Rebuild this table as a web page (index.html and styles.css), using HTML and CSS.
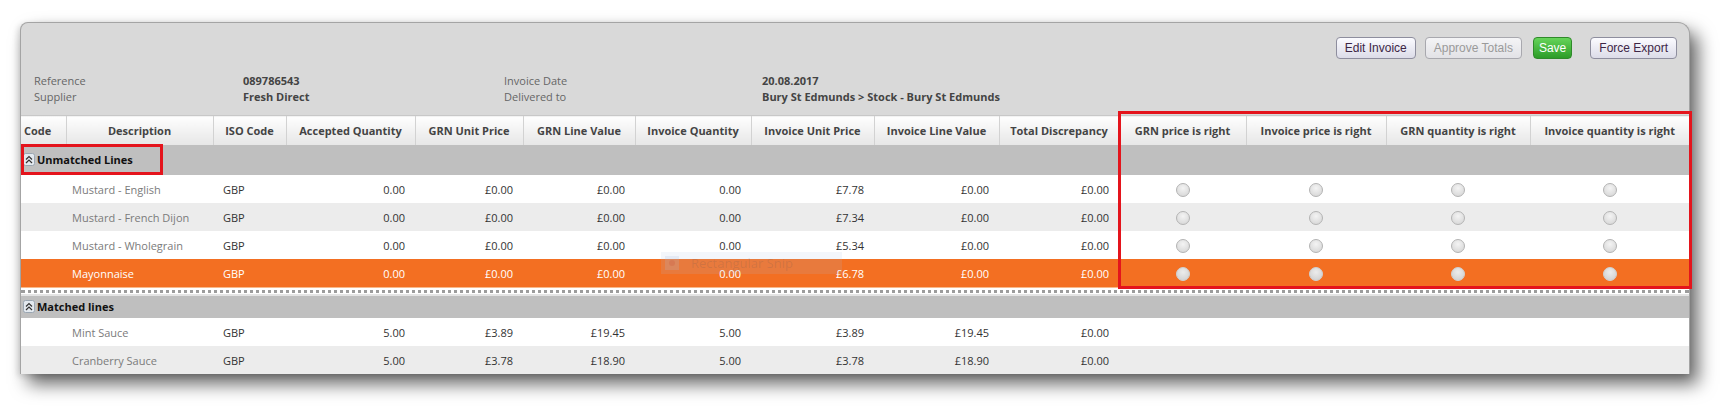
FILE: index.html
```html
<!DOCTYPE html>
<html lang="en">
<head>
  <meta charset="UTF-8" />
  <title>Invoice Reconciliation</title>
  <link rel="stylesheet" href="styles.css">
</head>
<body>

  <div class="page">
    <div class="panel">

      <div class="toolbar">
        <button class="btn">Edit Invoice</button>
        <button class="btn btn-off">Approve Totals</button>
        <button class="btn btn-save">Save</button>
        <button class="btn btn-export">Force Export</button>
      </div>

      <div class="info">
        <div class="info-label">Reference<br>Supplier</div>
        <div class="info-value">089786543<br>Fresh Direct</div>
        <div class="info-label">Invoice Date<br>Delivered to</div>
        <div class="info-value">20.08.2017<br>Bury St Edmunds &gt; Stock - Bury St Edmunds</div>
      </div>

      <div class="grid-wrap">
        <table class="lines">
          <colgroup>
            <col style="width:45px"><col style="width:147px"><col style="width:73px"><col style="width:129px">
            <col style="width:108px"><col style="width:112px"><col style="width:116px"><col style="width:123px">
            <col style="width:125px"><col style="width:120px"><col style="width:127px"><col style="width:140px">
            <col style="width:144px"><col style="width:159px">
          </colgroup>
          <thead>
            <tr>
              <th class="th-code">Code</th>
              <th>Description</th>
              <th>ISO Code</th>
              <th>Accepted Quantity</th>
              <th>GRN Unit Price</th>
              <th>GRN Line Value</th>
              <th>Invoice Quantity</th>
              <th>Invoice Unit Price</th>
              <th>Invoice Line Value</th>
              <th>Total Discrepancy</th>
              <th>GRN price is right</th>
              <th>Invoice price is right</th>
              <th>GRN quantity is right</th>
              <th>Invoice quantity is right</th>
            </tr>
          </thead>
          <tbody>
            <tr class="group">
              <td colspan="14"><span class="group-icon"><svg width="12" height="13" viewBox="0 0 12 13"><rect x="0.5" y="0.5" width="11" height="12" rx="2" fill="#e3e9ef" stroke="#9aa6b2"/><path d="M3 6.5 L6 3.5 L9 6.5 M3 10 L6 7 L9 10" fill="none" stroke="#333" stroke-width="1.2"/></svg></span>Unmatched Lines</td>
            </tr>
            <tr class="row">
              <td></td><td class="desc">Mustard - English</td><td class="iso">GBP</td>
              <td class="num">0.00</td><td class="num">£0.00</td><td class="num">£0.00</td><td class="num">0.00</td>
              <td class="num">£7.78</td><td class="num">£0.00</td><td class="num">£0.00</td>
              <td class="chk"><span class="radio"></span></td><td class="chk"><span class="radio"></span></td>
              <td class="chk"><span class="radio"></span></td><td class="chk"><span class="radio"></span></td>
            </tr>
            <tr class="row alt">
              <td></td><td class="desc">Mustard - French Dijon</td><td class="iso">GBP</td>
              <td class="num">0.00</td><td class="num">£0.00</td><td class="num">£0.00</td><td class="num">0.00</td>
              <td class="num">£7.34</td><td class="num">£0.00</td><td class="num">£0.00</td>
              <td class="chk"><span class="radio"></span></td><td class="chk"><span class="radio"></span></td>
              <td class="chk"><span class="radio"></span></td><td class="chk"><span class="radio"></span></td>
            </tr>
            <tr class="row">
              <td></td><td class="desc">Mustard - Wholegrain</td><td class="iso">GBP</td>
              <td class="num">0.00</td><td class="num">£0.00</td><td class="num">£0.00</td><td class="num">0.00</td>
              <td class="num">£5.34</td><td class="num">£0.00</td><td class="num">£0.00</td>
              <td class="chk"><span class="radio"></span></td><td class="chk"><span class="radio"></span></td>
              <td class="chk"><span class="radio"></span></td><td class="chk"><span class="radio"></span></td>
            </tr>
            <tr class="row selected">
              <td></td><td class="desc">Mayonnaise</td><td class="iso">GBP</td>
              <td class="num">0.00</td><td class="num">£0.00</td><td class="num">£0.00</td><td class="num">0.00</td>
              <td class="num">£6.78</td><td class="num">£0.00</td><td class="num">£0.00</td>
              <td class="chk"><span class="radio"></span></td><td class="chk"><span class="radio"></span></td>
              <td class="chk"><span class="radio"></span></td><td class="chk"><span class="radio"></span></td>
            </tr>
            <tr class="sep">
              <td colspan="14"><div class="dots"></div></td>
            </tr>
            <tr class="group group-small">
              <td colspan="14"><span class="group-icon"><svg width="12" height="13" viewBox="0 0 12 13"><rect x="0.5" y="0.5" width="11" height="12" rx="2" fill="#e3e9ef" stroke="#9aa6b2"/><path d="M3 6.5 L6 3.5 L9 6.5 M3 10 L6 7 L9 10" fill="none" stroke="#333" stroke-width="1.2"/></svg></span>Matched lines</td>
            </tr>
            <tr class="row">
              <td></td><td class="desc">Mint Sauce</td><td class="iso">GBP</td>
              <td class="num">5.00</td><td class="num">£3.89</td><td class="num">£19.45</td><td class="num">5.00</td>
              <td class="num">£3.89</td><td class="num">£19.45</td><td class="num">£0.00</td>
              <td></td><td></td><td></td><td></td>
            </tr>
            <tr class="row alt">
              <td></td><td class="desc">Cranberry Sauce</td><td class="iso">GBP</td>
              <td class="num">5.00</td><td class="num">£3.78</td><td class="num">£18.90</td><td class="num">5.00</td>
              <td class="num">£3.78</td><td class="num">£18.90</td><td class="num">£0.00</td>
              <td></td><td></td><td></td><td></td>
            </tr>
          </tbody>
        </table>

        <div class="mark mark-group"></div>
        <div class="mark mark-cols"></div>
        <div class="snip"><span class="snip-icon"></span>Rectangular Snip</div>
      </div>

    </div>
  </div>

</body>
</html>
```

FILE: styles.css
```css
html, body { margin: 0; background: #fff; }
body { font-family: "Open Sans", "Noto Sans", sans-serif; font-size: 11px; color: #333; }
.page { padding: 22px 0 42px 20px; }

.panel { position: relative; width: 1668px; background: #d9d9d9; border: 1px solid #a4a4a4; border-bottom: none; border-radius: 8px 12px 0 0; box-shadow: 8px 10px 18px rgba(0,0,0,0.6), -2px 2px 6px rgba(0,0,0,0.14); }

.toolbar { display: flex; justify-content: flex-end; padding: 14px 12px 0 0; }
.btn { height: 22px; margin-left: 9px; padding: 0 8px; font-family: "Liberation Sans", Arial, sans-serif; font-size: 12px; color: #3d2646; background: linear-gradient(#fbfbff, #dcdce8); border: 1px solid #8e8e9e; border-radius: 4px; }
.btn-off { color: #9a9a9a; background: linear-gradient(#f4f4f6, #e2e2e6); border-color: #a8a8ae; }
.btn-save { margin-left: 11px; padding: 0 5px; color: #fff; background: linear-gradient(#66d45a, #2c9c28); border-color: #2f8a2a; }
.btn-export { margin-left: 18px; }

.info { display: grid; grid-template-columns: 209px 261px 258px 1fr; margin: 14px 0 10px; padding-left: 13px; line-height: 16px; }
.info-label { color: #666; }
.info-value { color: #444; font-weight: bold; }

.grid-wrap { position: relative; }
.lines { width: 1668px; border-collapse: collapse; table-layout: fixed; background: #fff; }
.lines th { height: 29px; padding: 0 4px; font-weight: bold; color: #444; text-align: center; white-space: nowrap; overflow: hidden; background: linear-gradient(#fefefe, #e6e6e6); border-left: 1px solid #d2d2d2; border-top: 1px solid #c8c8c8; }
.lines th.th-code { text-align: left; padding-left: 3px; border-left: none; }
.lines td { padding: 0 10px; white-space: nowrap; overflow: hidden; }

.group td { height: 30px; padding: 0 0 0 2px; background: #bfbfbf; color: #111; font-weight: bold; }
.group-small td { height: 22px; border-top: 2px solid #e4e4e4; }
.group-icon { display: inline-block; vertical-align: -2px; margin-right: 2px; }

.row td { height: 28px; }
.row.alt td { background: #ececec; }
.row .desc { padding-left: 6px; color: #7b7b7b; }
.row .iso { padding-left: 10px; }
.row .num { text-align: right; }
.row .chk { text-align: center; padding: 0; }
.row.selected td { background: #f36f22; color: #fff; border-bottom: 1px solid #f8b98a; }

.radio { display: inline-block; width: 12px; height: 12px; vertical-align: middle; border-radius: 50%; border: 1px solid #b4b4b4; background: radial-gradient(circle at 50% 35%, #f4f4f4, #d2d2d2); }
.selected .radio { border-color: #cfcfcf; background: radial-gradient(circle at 50% 35%, #ececec, #cdcdcd); }

.sep td { height: 6px; padding: 0; background: #fff; }
.dots { margin-top: 1px; border-top: 3px dotted #9c9c9c; }

.mark { position: absolute; border: 3px solid #e4141c; box-sizing: border-box; }
.mark-group { left: 0; top: 29px; width: 142px; height: 31px; }
.mark-cols { left: 1097px; top: -4px; width: 574px; height: 178px; }

.snip { position: absolute; left: 640px; top: 137px; width: 181px; height: 22px; line-height: 22px; padding-left: 30px; box-sizing: border-box; font-size: 13px; color: rgba(80,80,90,0.16); background: rgba(170,190,225,0.14); }
.snip-icon { position: absolute; left: 4px; top: 4px; width: 14px; height: 14px; background: rgba(170,190,225,0.2); }
.snip-icon::after { content: ""; position: absolute; left: 4px; top: 4px; width: 6px; height: 6px; border-radius: 50%; background: rgba(200,60,40,0.18); }
```
